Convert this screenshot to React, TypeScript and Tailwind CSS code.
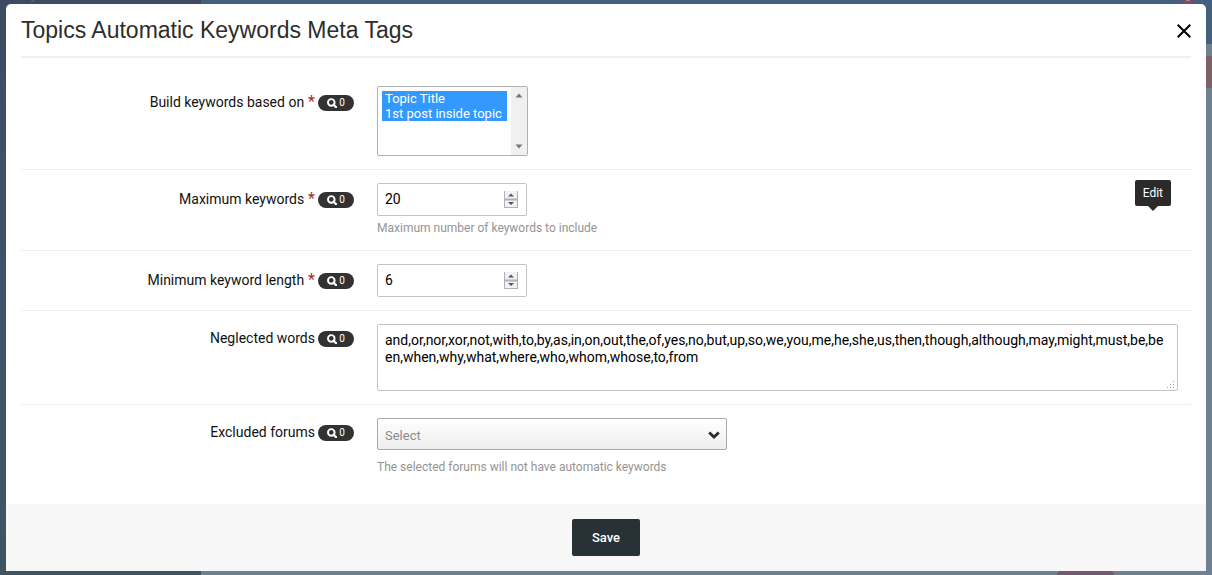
import type { ReactNode } from 'react'

type RowProps = {
  id: string
  label: string
  required?: boolean
  first?: boolean
  last?: boolean
  children: ReactNode
}

function CountBadge() {
  return (
    <button type="button" className="flex h-4 w-9 items-center justify-center gap-[2px] rounded-full bg-[#323232] text-[10px] leading-4 text-white">
      <svg viewBox="0 0 10 10" className="size-[10px]" fill="none" stroke="currentColor" aria-hidden="true">
        <circle cx="4.3" cy="4.4" r="3.3" strokeWidth="1.9" />
        <path d="M6.6 6.7 9 9.1" strokeWidth="2.2" strokeLinecap="round" />
      </svg>
      <span>0</span>
    </button>
  )
}

function Row({ id, label, required, first, last, children }: RowProps) {
  return (
    <div className={`flex ${first ? 'pt-7' : 'pt-[13px]'} ${last ? 'pb-[29px]' : 'border-b border-[#eeeeee] pb-[13px]'}`}>
      <div className={`flex w-[333px] shrink-0 items-start justify-end gap-[3px] ${required ? 'pt-[9px]' : 'pt-[7px]'}`}>
        <label htmlFor={id} className="-mt-px text-sm leading-4 text-[#111111]">
          {label}
          {required && <span className="text-base leading-none text-[#a82a2a]"> *</span>}
        </label>
        <CountBadge />
      </div>
      <div className="ml-[23px] mr-[13px] min-w-0 flex-1">{children}</div>
    </div>
  )
}

function NumberField({ id, value }: { id: string; value: number }) {
  return (
    <div className="flex h-[33px] w-[150px] items-center rounded-xs border border-[#c4c4c4] bg-white pl-[7px] pr-2">
      <input
        id={id}
        type="number"
        defaultValue={value}
        className="min-w-0 flex-1 appearance-none bg-transparent pb-[2px] text-sm text-black outline-none [appearance:textfield]"
      />
      <svg viewBox="0 0 14 17" className="h-[17px] w-[14px]" aria-hidden="true">
        <path d="M0 0h14v17H0z" fill="#f1f1f4" />
        <path d="M.5 0v17M13.5 0v17M0 16.5h14" stroke="#b0b0b6" />
        <path d="M0 8.5h14" stroke="#b0b0b6" strokeWidth="2" />
        <path d="M7 2.5 10 5.5H4zM7 14l3-3H4z" fill="#55565f" />
      </svg>
    </div>
  )
}

function Help({ children }: { children: ReactNode }) {
  return <p className="text-xs text-[#949494]">{children}</p>
}

// Dimmed admin page that shows round the edges of the dialog
function Backdrop() {
  return (
    <div className="absolute inset-0 flex overflow-hidden bg-[#6f8090]" aria-hidden="true">
      <div className="w-[201px] bg-linear-to-b from-[#3d4b60] via-[#40526b] to-[#3e5560]">
        <p className="-mt-4 ml-[21px] text-base leading-5 text-[#58677a]">System</p>
      </div>
      <div className="flex flex-1 flex-col">
        <div className="flex h-11 justify-end bg-[#43607d]">
          <span className="-mt-3 mr-4 size-4 rounded-full bg-[#7d4f66] text-center text-[10px] leading-5 text-[#b3a5b3]">3</span>
        </div>
        <div className="mt-3 h-8 bg-[#7c6166]" />
        <div className="flex-1" />
        <div className="mr-[98px] h-1 w-[57px] self-end rounded-t-full bg-[#75596c]" />
      </div>
    </div>
  )
}

export default function App() {
  return (
    <div className="relative min-h-screen px-[6px] py-1 font-[Roboto,sans-serif]">
      <Backdrop />
      <div role="dialog" aria-labelledby="dialog-title" className="relative rounded-t-[5px] bg-white">
        <div className="px-[15px]">
          <header className="flex items-start justify-between border-b-2 border-[#f0f0f0] py-[10px]">
            <h1 id="dialog-title" className="font-['Liberation_Sans',sans-serif] text-[23px] leading-8 text-[#2d2d2d]">
              Topics Automatic Keywords Meta Tags
            </h1>
            <button type="button" aria-label="Close" className="mt-[10px]">
              <svg viewBox="0 0 14 14" className="size-[14px]" stroke="#000000" strokeWidth="2" aria-hidden="true">
                <path d="m.7.7 12.6 12.6M13.3.7.7 13.3" />
              </svg>
            </button>
          </header>

          <form>
            <Row id="based-on" label="Build keywords based on" required first>
              <div className="flex h-[70px] w-[151px] rounded-xs border border-[#b0b0b0] bg-white">
                <select
                  id="based-on"
                  multiple
                  defaultValue={['title', 'post']}
                  className="h-full flex-1 appearance-none overflow-hidden p-1 text-[13px] leading-[15px] outline-none"
                >
                  <option value="title" className="min-h-0 bg-[linear-gradient(#3399ff,#3399ff)] p-0 px-[3px] text-white checked:text-white">Topic Title</option>
                  <option value="post" className="min-h-0 bg-[linear-gradient(#3399ff,#3399ff)] p-0 px-[3px] text-white checked:text-white">1st post inside topic</option>
                </select>
                <div className="flex w-4 flex-col items-center justify-between bg-[#f0f0f0] py-[6px]">
                  <svg viewBox="0 0 8 5" className="h-[5px] w-2" aria-hidden="true"><path d="M4 .5 7.5 4.5h-7z" fill="#777777" /></svg>
                  <svg viewBox="0 0 8 5" className="h-[5px] w-2" aria-hidden="true"><path d="M4 4.5.5.5h7z" fill="#777777" /></svg>
                </div>
              </div>
            </Row>

            <Row id="max-keywords" label="Maximum keywords" required>
              <div className="flex items-start justify-between">
                <div>
                  <NumberField id="max-keywords" value={20} />
                  <div className="pb-[1px] pt-1"><Help>Maximum number of keywords to include</Help></div>
                </div>
                <div role="tooltip" className="relative -mt-[3px] mr-[7px] rounded-xs bg-[#2a2a2a] px-2 py-[5px] text-xs text-white">
                  Edit
                  <svg viewBox="0 0 10 5" className="absolute left-[13px] top-full h-[5px] w-[10px]" aria-hidden="true">
                    <path d="M0 0h10L5 5z" fill="#2a2a2a" />
                  </svg>
                </div>
              </div>
            </Row>

            <Row id="min-length" label="Minimum keyword length" required>
              <NumberField id="min-length" value={6} />
            </Row>

            <Row id="neglected" label="Neglected words">
              <div className="relative">
                <textarea
                  id="neglected"
                  defaultValue="and,or,nor,xor,not,with,to,by,as,in,on,out,the,of,yes,no,but,up,so,we,you,me,he,she,us,then,though,although,may,might,must,be,been,when,why,what,where,who,whom,whose,to,from"
                  className="block h-[67px] w-full resize-none rounded-xs border border-[#c4c4c4] py-[7px] pl-[7px] pr-3 text-sm leading-[17px] break-all text-black outline-none"
                />
                <svg viewBox="0 0 8 8" className="absolute bottom-[2px] right-[3px] size-2" fill="#9a9a9a" aria-hidden="true">
                  <path d="M6 0h1v1H6zM3 3h1v1H3zM6 3h1v1H6zM0 6h1v1H0zM3 6h1v1H3zM6 6h1v1H6z" />
                </svg>
              </div>
            </Row>

            <Row id="excluded" label="Excluded forums" last>
              <div className="relative w-[350px] max-w-full">
                <select
                  id="excluded"
                  className="block h-8 w-full appearance-none rounded-xs border border-[#aaaaaa] bg-linear-to-b from-white to-[#eeeeee] px-[7px] pt-[3px] text-[13px] text-[#8c8c8c] outline-none"
                >
                  <option>Select</option>
                </select>
                <svg viewBox="0 0 12 8" className="pointer-events-none absolute right-[7px] top-[13px] h-2 w-3" fill="none" stroke="#2b2b2b" strokeWidth="2.8" aria-hidden="true">
                  <path d="m1.2 1.4 4.8 4.6 4.8-4.6" />
                </svg>
              </div>
              <div className="pt-[9px]"><Help>The selected forums will not have automatic keywords</Help></div>
            </Row>
          </form>
        </div>

        <footer className="flex justify-center bg-[#f7f7f7] py-[15px]">
          <button type="button" className="h-[37px] rounded-xs bg-[#283136] px-5 text-[13px] font-medium text-white">
            Save
          </button>
        </footer>
      </div>
    </div>
  )
}
